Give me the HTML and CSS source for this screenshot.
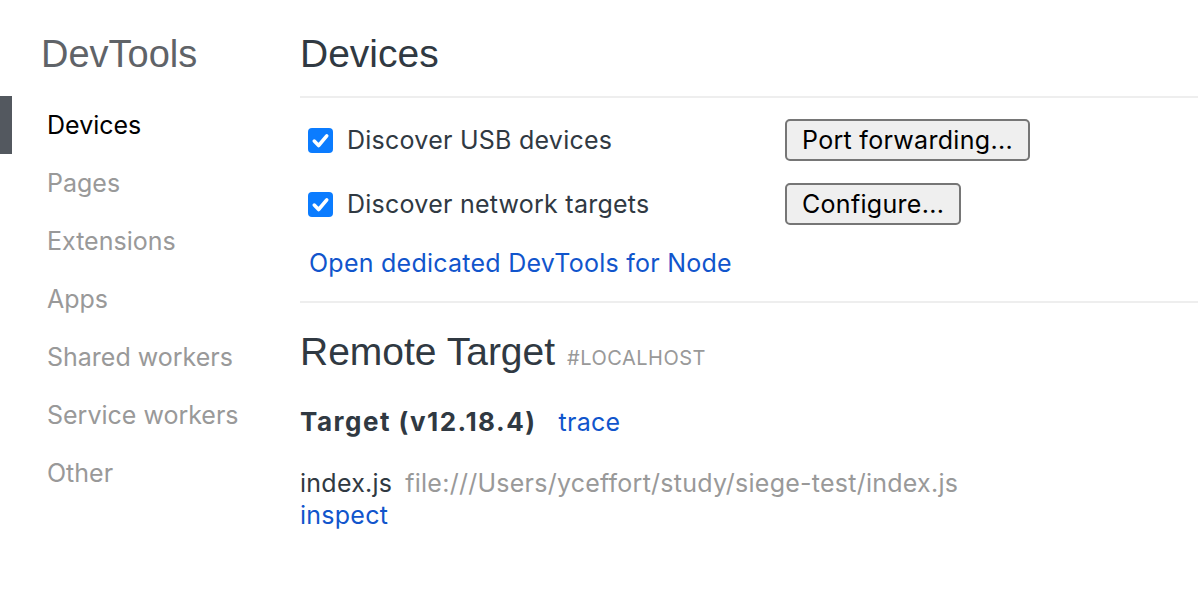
FILE: index.html
```html
<!DOCTYPE html>
<html>
<head>
<meta charset="utf-8">
<link rel="stylesheet" href="styles.css">
</head>
<body>
<div class="page">
  <nav class="sidebar">
    <div class="brand">DevTools</div>
    <ul class="nav">
      <li class="nav-item selected">Devices</li>
      <li class="nav-item">Pages</li>
      <li class="nav-item">Extensions</li>
      <li class="nav-item">Apps</li>
      <li class="nav-item">Shared workers</li>
      <li class="nav-item">Service workers</li>
      <li class="nav-item">Other</li>
    </ul>
  </nav>
  <main class="content">
    <h1 class="page-title">Devices</h1>
    <section class="devices">
      <div class="option-row">
        <label class="option">
          <span class="checkbox"><svg viewBox="0 0 24 24" width="25" height="25"><path d="M6 12.5 L10.2 16.8 L18 7.5" fill="none" stroke="#fff" stroke-width="3.4" stroke-linecap="round" stroke-linejoin="round"/></svg></span>
          <span>Discover USB devices</span>
        </label>
        <button class="btn">Port forwarding...</button>
      </div>
      <div class="option-row">
        <label class="option">
          <span class="checkbox"><svg viewBox="0 0 24 24" width="25" height="25"><path d="M6 12.5 L10.2 16.8 L18 7.5" fill="none" stroke="#fff" stroke-width="3.4" stroke-linecap="round" stroke-linejoin="round"/></svg></span>
          <span>Discover network targets</span>
        </label>
        <button class="btn">Configure...</button>
      </div>
      <a class="link node-link" href="#">Open dedicated DevTools for Node</a>
    </section>
    <section class="remote">
      <h2 class="remote-title">Remote Target<span class="remote-host">#LOCALHOST</span></h2>
      <div class="target-head"><span class="target-name">Target (v12.18.4)</span><a class="link" href="#">trace</a></div>
      <div class="target-item">
        <div><span class="item-name">index.js</span><span class="item-url">file:///Users/yceffort/study/siege-test/index.js</span></div>
        <a class="link" href="#">inspect</a>
      </div>
    </section>
  </main>
</div>
</body>
</html>
```

FILE: styles.css
```css
* { box-sizing: border-box; }
html, body { margin: 0; padding: 0; background: #fff; }
body {
  font-family: Inter, "Liberation Sans", Arial, sans-serif;
  color: #303942;
  letter-spacing: 0.25px;
  width: 1198px;
  height: 592px;
  overflow: hidden;
}
.page { display: flex; }
.sidebar { width: 300px; flex: none; }
.brand {
  height: 96px;
  padding: 32px 0 0 41px;
  font-family: "Liberation Sans", Arial, sans-serif;
  font-size: 38px;
  line-height: 44px;
  letter-spacing: 0;
  color: #5f6368;
}
.nav { list-style: none; margin: 0; padding: 0; }
.nav-item {
  height: 58px;
  line-height: 58px;
  padding-left: 35px;
  font-size: 25px;
  letter-spacing: 0;
  color: #999;
  border-left: 12px solid transparent;
}
.nav-item.selected { color: #000; border-left-color: #53585f; }
.content { flex: 1; min-width: 0; }
.page-title, .remote-title {
  margin: 0;
  font-weight: normal;
  font-family: "Liberation Sans", Arial, sans-serif;
  font-size: 39px;
  letter-spacing: 0;
}
.page-title {
  height: 98px;
  padding-top: 32px;
  line-height: 44px;
  border-bottom: 2px solid #eee;
}
.devices {
  padding: 21px 0 0 8px;
  border-bottom: 2px solid #eee;
  height: 205px;
}
.option-row {
  display: flex;
  align-items: center;
  height: 42px;
  margin-bottom: 22px;
}
.option {
  width: 477px;
  display: flex;
  align-items: center;
  gap: 14px;
  font-size: 25px;
}
.checkbox {
  width: 25px;
  height: 25px;
  border-radius: 4px;
  background: #0b7cff;
  display: flex;
}
.btn {
  height: 42px;
  padding: 0 15px;
  font-family: inherit;
  font-size: 25px;
  letter-spacing: 0.3px;
  color: #000;
  background: #efefef;
  border: 2px solid #767676;
  border-radius: 5px;
}
.link { color: #1155cc; text-decoration: none; font-size: 25px; }
.node-link { display: block; margin-left: 1px; line-height: 32px; margin-top: 1px; }
.remote-title { padding-top: 27px; line-height: 44px; }
.remote-host {
  font-family: Inter, "Liberation Sans", Arial, sans-serif;
  font-size: 20px;
  letter-spacing: 0.5px;
  color: #999;
  margin-left: 12px;
}
.target-head {
  margin-top: 26px;
  line-height: 32px;
  font-size: 25px;
  display: flex;
  gap: 22px;
}
.target-name { font-weight: bold; font-size: 26px; letter-spacing: 1.5px; }
.target-item {
  margin-top: 29px;
  font-size: 25px;
  line-height: 32px;
}
.item-name { margin-right: 13px; }
.item-url { color: #999; }
```
